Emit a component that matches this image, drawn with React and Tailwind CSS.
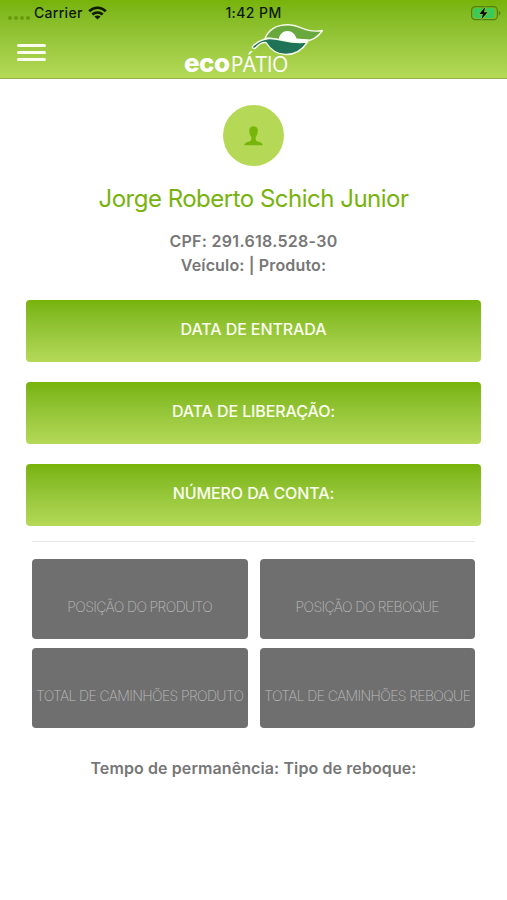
import React from "react";

const infoButtons = ["DATA DE ENTRADA", "DATA DE LIBERAÇÃO:", "NÚMERO DA CONTA:"];

const tiles = [
  "POSIÇÃO DO PRODUTO",
  "POSIÇÃO DO REBOQUE",
  "TOTAL DE CAMINHÕES PRODUTO",
  "TOTAL DE CAMINHÕES REBOQUE",
];

function WifiIcon() {
  return (
    <svg width="19" height="14" viewBox="0 0 19 14" fill="none" stroke="#0d1a00" strokeWidth="2.7">
      <path d="M1.2 5.2C6 0.6 13 0.6 17.8 5.2" />
      <path d="M4.3 8.6C7.3 5.8 11.7 5.8 14.7 8.6" />
      <path d="M9.5 13.6L6.4 10.6C8.2 9 10.8 9 12.6 10.6Z" fill="#0d1a00" stroke="none" />
    </svg>
  );
}

function BatteryIcon() {
  return (
    <svg width="30" height="15" viewBox="0 0 30 15" className="-mr-1">
      <rect x="0.6" y="0.6" width="25.8" height="13" rx="3.6" fill="none" stroke="#4f8215" strokeWidth="1.2" />
      <rect x="2.3" y="2.3" width="21" height="9.6" rx="2" fill="#37cb5c" />
      <path d="M27.8 5v4.4c1-.3 1.6-1.2 1.6-2.2S28.8 5.3 27.8 5z" fill="#4f8215" />
      <path
        d="M14.1 0.9L8.4 7.9h3.5l-1.5 5.6 6.1-7.2h-3.5z"
        fill="#050d02"
        stroke="#8cc52e"
        strokeWidth="1.6"
        paintOrder="stroke"
      />
    </svg>
  );
}

function Leaf() {
  return (
    <svg width="74" height="33" viewBox="0 0 74 33" className="absolute left-[67px] -top-px">
      {/* upper leaf */}
      <path
        d="M14 15.5C18 6 26 1.8 37 1.8C50 2 54 10.5 71.5 7.5C67 14 62 17.500 51 19L40 19L26 16.5C22 15.5 18 15 14 15.5Z"
        fill="#68a83d"
        stroke="#f5fbe9"
        strokeWidth="1.4"
        strokeLinejoin="round"
      />
      <path d="M27.5 17C28.5 11 32 8 36.500 8C41 8 44.500 11.500 45.500 15.500L59 16.500L52 19.500L40 21Z" fill="#fff" />
      {/* lower leaf with its stem */}
      <path
        d="M1.5 23.5C6 19 11 16 18 15.5C29 15 38 21.5 56.5 19C51 27.500 44 31.500 35 31.500C26 31.500 19 26 15 19.5C11 19 7 22 4.5 25C2.500 26 0.800 25 1.500 23.500Z"
        fill="#1f7356"
        stroke="#f5fbe9"
        strokeWidth="1.4"
        strokeLinejoin="round"
      />
    </svg>
  );
}

function Logo() {
  return (
    <div className="relative h-[54px] w-[142px]">
      <Leaf />
      <div className="flex items-baseline pt-[25px] leading-[28px] text-white">
        <span className="text-[26px] font-extrabold tracking-[-0.5px]">eco</span>
        <span className="ml-px font-['Open_Sans',sans-serif] text-[21px] tracking-[-0.5px]">PÁTIO</span>
      </div>
    </div>
  );
}

export default function App() {
  return (
    <main className="h-[900px] w-full overflow-hidden bg-white font-['Inter',sans-serif]">
      {/* HEADER */}
      <header className="h-[79px] border-b border-[#93b04d] bg-linear-to-b from-[#77b307] to-[#b4d957]">
        <div className="grid h-[24px] grid-cols-3 items-center px-2 pt-[2px] text-[14px] font-medium leading-[22px] text-[#0d1a00]">
          <div className="flex items-center">
            <div className="mr-1 flex gap-[2px] pt-[9px]">
              <i className="size-1 rounded-full bg-[#689b0c]" />
              <i className="size-1 rounded-full bg-[#689b0c]" />
              <i className="size-1 rounded-full bg-[#689b0c]" />
              <i className="size-1 rounded-full bg-[#689b0c]" />
            </div>
            <span className="mr-[5px] tracking-[0.3px]">Carrier</span>
            <WifiIcon />
          </div>
          <span className="text-center tracking-[0.4px]">1:42 PM</span>
          <div className="flex justify-end pr-[2px]">
            <BatteryIcon />
          </div>
        </div>

        <div className="flex items-start pl-[17px]">
          <button className="mt-5 flex w-[29px] flex-col gap-1">
            <i className="h-[3px] rounded-full bg-[#fbfff0]" />
            <i className="h-[3px] rounded-full bg-[#fbfff0]" />
            <i className="h-[3px] rounded-full bg-[#fbfff0]" />
          </button>
          <div className="ml-[138px]">
            <Logo />
          </div>
        </div>
      </header>

      {/* PROFILE */}
      <section className="flex flex-col items-center pt-[26px]">
        <div className="flex size-[61px] items-center justify-center rounded-full bg-[#b5d957]">
          <svg width="19" height="20" viewBox="0 0 19 20" className="fill-[#77b50b]">
            <path d="M9.5 0.3C6.9 0.3 5.2 2 5.2 4.6C5.2 7.5 6.2 9.5 7.3 11V13.3C7.3 14.7 6.3 15.2 4.5 15.7C2 16.4 0.5 17 0.2 19.3H18.8C18.5 17 17 16.4 14.5 15.7C12.7 15.2 11.7 14.7 11.7 13.3V11C12.8 9.5 13.8 7.5 13.8 4.6C13.8 2 12.1 0.3 9.5 0.3Z" />
          </svg>
        </div>
        <h1 className="mt-[17px] text-[24px] leading-8 tracking-[-0.5px] text-[#77b30c]">Jorge Roberto Schich Junior</h1>
        <div className="mt-[14px] text-center text-[16px] font-semibold leading-6 text-[#777]">
          <p className="tracking-[0.3px]">CPF: 291.618.528-30</p>
          <p className="tracking-[0.15px]">Veículo: | Produto:</p>
        </div>
      </section>

      {/* INFO BUTTONS */}
      <section className="mt-[23px] flex flex-col gap-5 px-[26px]">
        {infoButtons.map((label) => (
          <button
            key={label}
            className="h-[62px] rounded bg-linear-to-b from-[#77b307] to-[#b4d957] pb-1 text-[16px] font-medium tracking-[-0.1px] text-[#fbfff0]"
          >
            {label}
          </button>
        ))}
      </section>

      {/* TILES */}
      <section className="mx-8 mt-[15px] border-t border-[#e6e6e6] pt-[17px]">
        <div className="grid grid-cols-2 gap-x-3 gap-y-[9px]">
          {tiles.map((label) => (
            <button
              key={label}
              className="h-20 whitespace-nowrap rounded bg-[#6f6f6f] pt-[15px] text-[14px] font-extralight tracking-[-0.63px] text-[#bdbdbd]"
            >
              {label}
            </button>
          ))}
        </div>
      </section>

      <p className="mt-[28px] text-center text-[16px] font-semibold leading-6 tracking-[0.1px] text-[#777]">
        Tempo de permanência: Tipo de reboque:
      </p>
    </main>
  );
}
